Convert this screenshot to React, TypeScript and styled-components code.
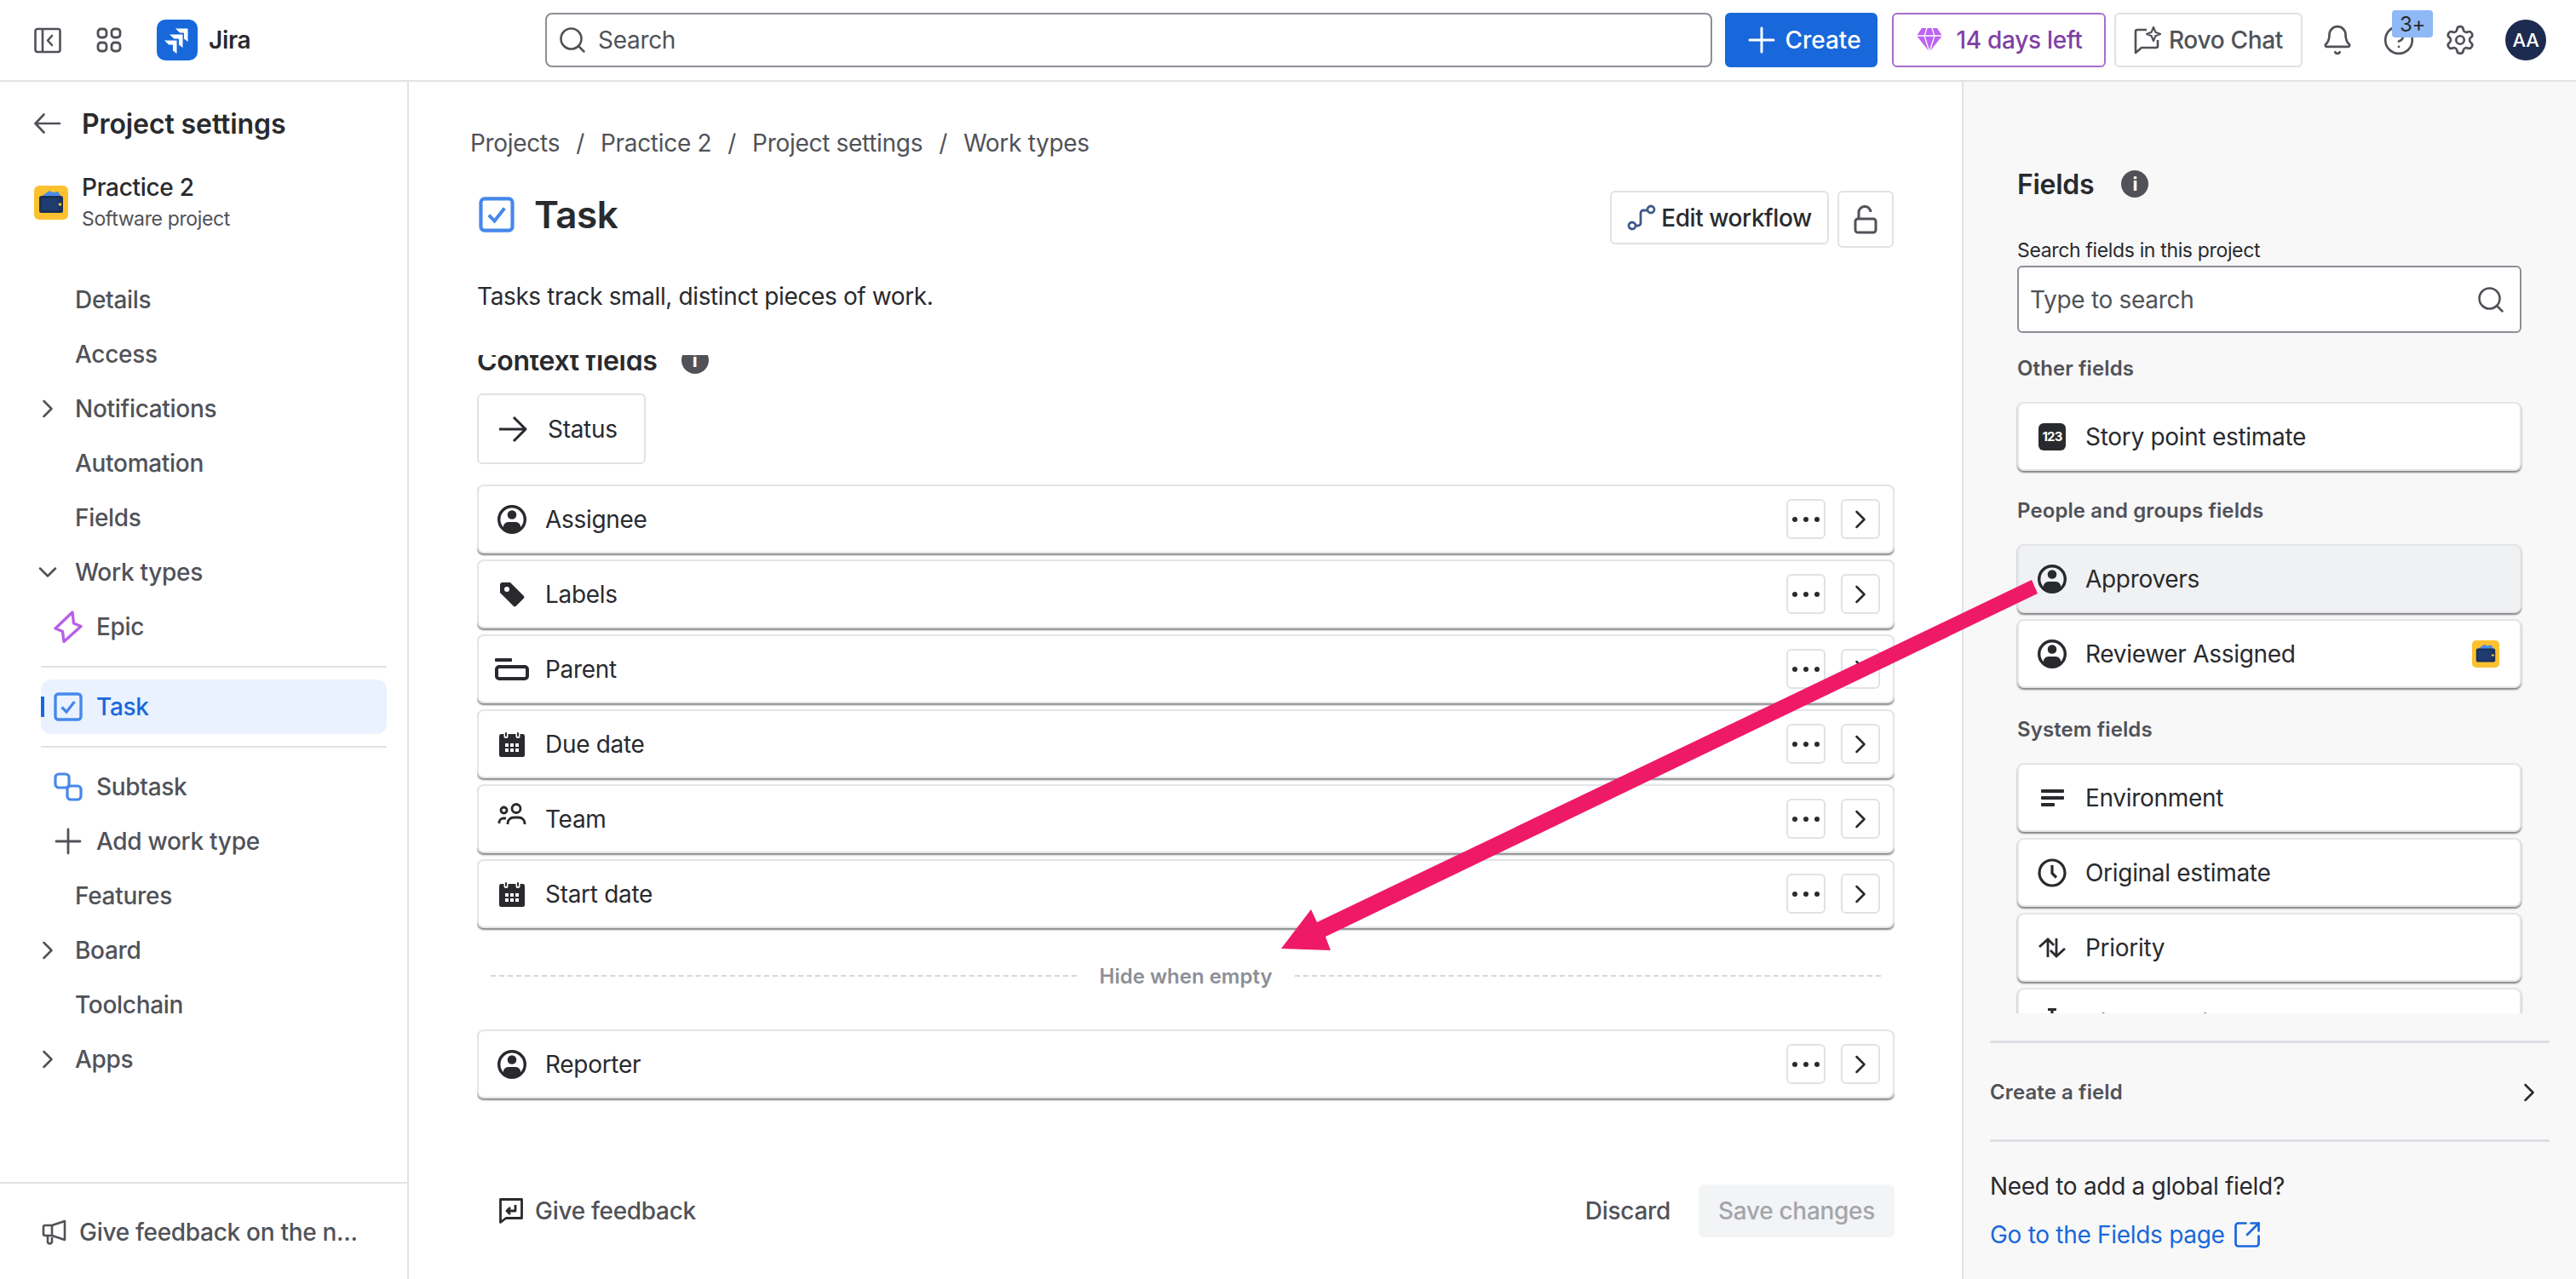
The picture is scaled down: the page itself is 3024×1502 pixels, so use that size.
import React from 'react';
import styled, { createGlobalStyle } from 'styled-components';
import { Bell, ChevronDown, ChevronRight, CircleHelp, Plus, Search, Settings, SquareArrowOutUpRight } from 'lucide-react';

const GlobalStyle = createGlobalStyle`
  html, body {
    margin: 0;
    padding: 0;
    background: #fff;
    overflow: hidden;
  }
  * {
    box-sizing: border-box;
  }
  svg {
    flex: none;
  }
`;

const Page = styled.div`
  position: relative;
  width: 3024px;
  height: 1502px;
  display: flex;
  flex-direction: column;
  overflow: hidden;
  font-family: Inter, 'Liberation Sans', sans-serif;
  font-size: 28px;
  letter-spacing: -0.3px;
  color: #292a2e;
`;

const TopBar = styled.header`
  height: 96px;
  flex: none;
  display: flex;
  align-items: center;
  border-bottom: 2px solid #e0e2e6;
`;

const Brand = styled.div`
  width: 640px;
  flex: none;
  display: flex;
  align-items: center;
  gap: 40px;
  padding-left: 40px;
`;

const IconSlot = styled.span<{ $ml?: number }>`
  width: 32px;
  height: 32px;
  flex: none;
  display: inline-flex;
  align-items: center;
  justify-content: center;
  position: relative;
  margin-left: ${({ $ml }) => $ml ?? 0}px;
  color: #505258;
`;

const LogoGroup = styled.div`
  display: flex;
  align-items: center;
  gap: 13px;
`;

const LogoText = styled.span`
  font-size: 28px;
  font-weight: 600;
  color: #292a2e;
`;

const SearchBar = styled.div`
  width: 1370px;
  height: 64px;
  flex: none;
  display: flex;
  align-items: center;
  gap: 12px;
  padding-left: 12px;
  border: 2px solid #8c8f97;
  border-radius: 8px;
  color: #505258;
`;

const buttonGap = { primary: 3, trial: 16, plain: 9 };

const TopButton = styled.button<{ $width: number; $ml: number; $kind: 'primary' | 'trial' | 'plain' }>`
  width: ${({ $width }) => $width}px;
  height: 64px;
  flex: none;
  margin-left: ${({ $ml }) => $ml}px;
  display: flex;
  align-items: center;
  justify-content: center;
  gap: ${({ $kind }) => buttonGap[$kind]}px;
  padding: 0;
  border-radius: 6px;
  font: inherit;
  letter-spacing: ${({ $kind }) => ($kind === 'primary' ? '0' : 'inherit')};
  font-weight: 500;
  background: ${({ $kind }) => ($kind === 'primary' ? '#1868db' : '#fff')};
  color: ${({ $kind }) => ($kind === 'primary' ? '#fff' : $kind === 'trial' ? '#803fa5' : '#505258')};
  border: 2px solid
    ${({ $kind }) => ($kind === 'primary' ? '#1868db' : $kind === 'trial' ? '#a86cc9' : '#dfe1e5')};
`;

const Badge = styled.span`
  position: absolute;
  left: 8px;
  top: -19px;
  width: 48px;
  height: 32px;
  display: flex;
  align-items: center;
  justify-content: center;
  background: #8fb8f6;
  border-radius: 4px;
  font-size: 24px;
  color: #292a2e;
`;

const Avatar = styled.span`
  width: 48px;
  height: 48px;
  flex: none;
  margin-left: 37px;
  border-radius: 50%;
  background: #1c2b4f;
  color: #fff;
  font-size: 22px;
  font-weight: 500;
  display: flex;
  align-items: center;
  justify-content: center;
`;

const Body = styled.div`
  flex: 1;
  min-height: 0;
  display: flex;
`;

const Sidebar = styled.aside`
  width: 480px;
  flex: none;
  display: flex;
  flex-direction: column;
  border-right: 2px solid #e0e2e6;
`;

const BackRow = styled.div`
  height: 50px;
  margin-top: 24px;
  display: flex;
  align-items: center;
  gap: 24px;
  padding-left: 40px;
  font-size: 32px;
  font-weight: 600;
  letter-spacing: -0.1px;
`;

const ProjectRow = styled.div`
  margin-top: 32px;
  display: flex;
  align-items: center;
  gap: 16px;
  padding-left: 40px;
`;

const ProjectText = styled.div`
  display: flex;
  flex-direction: column;
  gap: 3px;
`;

const ProjectName = styled.span`
  line-height: 36px;
  font-weight: 500;
`;

const ProjectKind = styled.span`
  line-height: 32px;
  font-size: 23px;
  letter-spacing: -0.37px;
  color: #505258;
`;

const NavList = styled.nav`
  margin-top: 47px;
  display: flex;
  flex-direction: column;
`;

const NavRow = styled.div`
  height: 64px;
  display: flex;
  align-items: center;
  padding-left: 88px;
  font-weight: 500;
  color: #505258;
`;

const NavChevron = styled.span`
  width: 36px;
  height: 36px;
  margin-left: -50px;
  margin-right: 14px;
  display: flex;
  align-items: center;
  justify-content: center;
`;

const TypeRow = styled.div`
  height: 64px;
  display: flex;
  align-items: center;
  gap: 16px;
  padding-left: 63px;
  font-weight: 500;
  color: #505258;
`;

const TypeIcon = styled.span`
  width: 34px;
  height: 38px;
  flex: none;
  display: flex;
  align-items: center;
  justify-content: center;
`;

const NavSeparator = styled.div`
  height: 2px;
  margin: 14px 24px 14px 48px;
  background: #e0e2e6;
`;

const ActiveType = styled.div`
  position: relative;
  height: 64px;
  margin: 0 24px 0 48px;
  display: flex;
  align-items: center;
  gap: 16px;
  padding-left: 15px;
  background: #e9f2fe;
  border-radius: 12px;
  font-weight: 500;
  color: #1868db;

  &::before {
    content: '';
    position: absolute;
    left: 0;
    top: 20px;
    width: 4px;
    height: 24px;
    background: #1868db;
  }
`;

const SidebarFooter = styled.div`
  margin-top: auto;
  height: 114px;
  display: flex;
  align-items: center;
  gap: 13px;
  padding: 2px 0 0 48px;
  border-top: 2px solid #e0e2e6;
  font-weight: 500;
  color: #505258;
  white-space: nowrap;
`;

const Main = styled.main`
  flex: 1;
  min-width: 0;
  display: flex;
  flex-direction: column;
  padding: 0 79px 0 80px;
`;

const Breadcrumb = styled.div`
  margin: 52px 0 0 -8px;
  height: 40px;
  display: flex;
  align-items: center;
  gap: 19px;
  color: #505258;
`;

const TitleRow = styled.div`
  margin-top: 36px;
  height: 67px;
  display: flex;
  justify-content: space-between;
  align-items: flex-start;
  padding-right: 1px;
`;

const TitleGroup = styled.div`
  height: 56px;
  display: flex;
  align-items: center;
  gap: 23px;
  padding-left: 2px;
`;

const PageTitle = styled.h1`
  margin: 0;
  font-size: 44px;
  font-weight: 600;
  letter-spacing: -0.5px;
`;

const TitleActions = styled.div`
  display: flex;
  gap: 10px;
  align-items: flex-start;
`;

const OutlineButton = styled.button<{ $width: number; $height: number }>`
  width: ${({ $width }) => $width}px;
  height: ${({ $height }) => $height}px;
  display: flex;
  align-items: center;
  justify-content: center;
  gap: 6px;
  padding: 0;
  background: #fff;
  border: 2px solid #e0e2e6;
  border-radius: 6px;
  font: inherit;
  letter-spacing: -0.45px;
  font-weight: 500;
  color: #292a2e;
`;

const Description = styled.p`
  margin: 37px 0 0;
  line-height: 40px;
  letter-spacing: -0.38px;
`;

const ScrollArea = styled.div`
  margin-top: 49px;
  flex: 1;
  min-height: 0;
  overflow: hidden;
`;

const SectionHeading = styled.div`
  margin-top: -14px;
  height: 40px;
  display: flex;
  align-items: center;
  gap: 28px;
  font-size: 32px;
  font-weight: 600;
`;

const InfoDot = styled.span`
  width: 32px;
  height: 32px;
  flex: none;
  display: flex;
  align-items: center;
  justify-content: center;
  border-radius: 50%;
  background: #505258;
  color: #fff;
  font-size: 22px;
  font-weight: 700;
`;

const StatusBox = styled.div`
  margin-top: 19px;
  width: 198px;
  height: 83px;
  display: flex;
  align-items: center;
  gap: 24px;
  padding-left: 23px;
  border: 2px solid #e0e2e6;
  border-radius: 6px;
`;

const FieldStack = styled.div`
  margin-top: 24px;
  display: flex;
  flex-direction: column;
  gap: 7px;
`;

const FieldCard = styled.div<{ $active?: boolean }>`
  height: 81px;
  flex: none;
  display: flex;
  align-items: center;
  background: ${({ $active }) => ($active ? '#f0f1f2' : '#fff')};
  border: 2px solid #e4e5e8;
  border-radius: 8px;
  box-shadow: 0 2px 2px rgba(30, 31, 33, 0.55);
`;

const FieldIcon = styled.span<{ $width: number }>`
  width: ${({ $width }) => $width}px;
  flex: none;
  display: flex;
  align-items: center;
  justify-content: center;
`;

const FieldName = styled.span`
  flex: 1;
  min-width: 0;
`;

const SmallButton = styled.span`
  width: 46px;
  height: 47px;
  flex: none;
  margin-right: 18px;
  display: flex;
  align-items: center;
  justify-content: center;
  border: 2px solid #e0e2e6;
  border-radius: 6px;
  background: #fff;

  &:last-child {
    margin-right: 15px;
  }
`;

const EmptyDivider = styled.div`
  margin-top: 36px;
  height: 40px;
  display: flex;
  align-items: center;
  gap: 26px;
  padding: 0 16px;
  font-size: 24px;
  font-weight: 600;
  letter-spacing: 0;
  color: #8c8f97;
`;

const DashedLine = styled.span`
  flex: 1;
  border-top: 2px dashed #d6d8dc;
`;

const ReporterWrap = styled.div`
  margin-top: 43px;
`;

const FormFooter = styled.div`
  margin-top: 101px;
  height: 62px;
  display: flex;
  align-items: center;
  justify-content: space-between;
  font-weight: 500;
`;

const FeedbackLink = styled.div`
  display: flex;
  align-items: center;
  gap: 14px;
  padding-left: 26px;
  color: #505258;
`;

const FormActions = styled.div`
  display: flex;
  align-items: center;
  gap: 33px;
`;

const DiscardText = styled.span`
  color: #505258;
`;

const SaveButton = styled.span`
  width: 230px;
  height: 62px;
  display: flex;
  align-items: center;
  justify-content: center;
  background: #f3f4f5;
  border-radius: 6px;
  color: #a3a5ab;
`;

const Panel = styled.aside`
  width: 721px;
  flex: none;
  display: flex;
  flex-direction: column;
  background: #f8f8f8;
  border-left: 2px solid #e0e2e6;
`;

const PanelScroll = styled.div`
  height: 1094px;
  flex: none;
  overflow: hidden;
  padding: 100px 64px 0 63px;
`;

const PanelHeading = styled.div`
  height: 40px;
  display: flex;
  align-items: center;
  gap: 32px;
  font-size: 32px;
  font-weight: 600;
`;

const SearchLabel = styled.div`
  margin-top: 42px;
  line-height: 32px;
  font-size: 23px;
  letter-spacing: -0.35px;
`;

const FieldSearch = styled.div`
  margin-top: 2px;
  height: 79px;
  display: flex;
  align-items: center;
  justify-content: space-between;
  padding: 0 16px 0 13px;
  background: #fff;
  border: 2px solid #8c8f97;
  border-radius: 6px;
  color: #505258;
`;

const GroupLabel = styled.div<{ $mt: number }>`
  margin-top: ${({ $mt }) => $mt}px;
  line-height: 32px;
  font-size: 24px;
  font-weight: 600;
  letter-spacing: 0.1px;
  color: #505258;
`;

const PanelStack = styled.div`
  margin-top: 23px;
  display: flex;
  flex-direction: column;
  gap: 7px;
`;

const ProjectMark = styled.span`
  margin-right: 24px;
  display: flex;
`;

const NumberIcon = styled.span`
  width: 32px;
  height: 32px;
  display: flex;
  align-items: center;
  justify-content: center;
  background: #292a2e;
  border-radius: 6px;
  color: #fff;
  font-size: 15px;
  font-weight: 700;
  letter-spacing: -0.8px;
`;

const PanelBottom = styled.div`
  margin: 32px 31px 0 31px;
`;

const CreateRow = styled.div`
  height: 119px;
  display: flex;
  align-items: center;
  justify-content: space-between;
  padding: 2px 6px 0 0;
  border-top: 3px solid #dcdfe4;
  border-bottom: 3px solid #dcdfe4;
  font-size: 24px;
  font-weight: 600;
  letter-spacing: 0.1px;
  color: #505258;
`;

const HelpLine = styled.div`
  margin-top: 32px;
  line-height: 40px;
`;

const FieldsLink = styled.div`
  margin-top: 17px;
  line-height: 40px;
  display: flex;
  align-items: center;
  gap: 8px;
  color: #1868db;
`;

const ArrowOverlay = styled.svg`
  position: absolute;
  left: 0;
  top: 0;
  pointer-events: none;
`;

const ink = '#292a2e';

const PanelToggleIcon = () => (
  <svg width="32" height="32" viewBox="0 0 32 32" fill="none" stroke="currentColor" strokeWidth="2.6">
    <rect x="1.5" y="3" width="29" height="27" rx="2.5" />
    <path d="M10 3v27" />
    <path d="M21 11l-5 5.5 5 5.5" strokeLinecap="round" strokeLinejoin="round" />
  </svg>
);

const AppsIcon = () => (
  <svg width="32" height="32" viewBox="0 0 32 32" fill="none" stroke="currentColor" strokeWidth="2.8">
    <rect x="3" y="3" width="10" height="10" rx="3.5" />
    <rect x="19" y="3" width="10" height="10" rx="3.5" />
    <rect x="3" y="19" width="10" height="10" rx="3.5" />
    <rect x="19" y="19" width="10" height="10" rx="3.5" />
  </svg>
);

const JiraLogo = () => (
  <svg width="48" height="48" viewBox="0 0 48 48">
    <rect width="48" height="48" rx="10" fill="#1868db" />
    <g fill="#fff" stroke="#1868db" strokeWidth="1">
      <path d="M21 10h16v17l-5.500-4.500V16h-4.500z" />
      <path d="M14 17h17v17l-5.500-4.500V23h-5z" />
      <path d="M8 24h16v17l-5.500-4.500V30h-4.500z" />
    </g>
  </svg>
);

const GemIcon = () => (
  <svg width="32" height="30" viewBox="0 0 32 30">
    <path d="M7 1h18l6 9-15 19L1 10z" fill="#bf63f3" />
    <path d="M1 10h30M10 10l6 19 6-19M10 10l3-9M22 10l-3-9" stroke="#fff" strokeWidth="1.3" fill="none" />
  </svg>
);

const RovoIcon = () => (
  <svg width="32" height="34" viewBox="0 0 32 34" fill="none" stroke="currentColor" strokeWidth="2.6" strokeLinejoin="round">
    <path d="M15 5H4a2 2 0 0 0-2 2v25l7-6h17a2 2 0 0 0 2-2v-7" />
    <path d="M23 2l2.300 5.700L31 10l-5.700 2.300L23 18l-2.300-5.700L15 10l5.700-2.300z" strokeWidth="2.2" />
  </svg>
);

const BackArrow = () => (
  <svg width="32" height="32" viewBox="0 0 32 32" fill="none" stroke="#505258" strokeWidth="2.6" strokeLinecap="round" strokeLinejoin="round">
    <path d="M1.500 16H30M11.500 5.500L1.500 16l10 10.500" />
  </svg>
);

const WalletMark = ({ size }: { size: number }) => (
  <svg width={size} height={size} viewBox="0 0 40 40">
    <rect width="40" height="40" rx="6" fill="#fcc12f" />
    <path d="M8 13l10-7 4 2 6-1 4 6z" fill="#4a8be8" />
    <rect x="6" y="12" width="28" height="20" rx="2.500" fill="#1b3158" />
    <rect x="9" y="15" width="20" height="14" rx="1" fill="#1f3c70" />
    <circle cx="30.500" cy="22" r="1.800" fill="#fcc12f" />
  </svg>
);

const EpicIcon = () => (
  <svg width="34" height="38" viewBox="0 0 34 38" fill="none" stroke="#b85fe8" strokeWidth="3.300" strokeLinejoin="round">
    <path d="M22 2l1.500 13 8.500 3.500L12 36.500l-1.500-12L2 21z" />
  </svg>
);

const TaskIcon = ({ size }: { size: number }) => (
  <svg width={size} height={size} viewBox="0 0 34 34" fill="none" stroke="#4688ec">
    <rect x="2" y="2" width="30" height="30" rx="3.500" strokeWidth="3.400" />
    <path d="M9.500 17.500l5.500 5.500 9.500-12" strokeWidth="3.200" />
  </svg>
);

const SubtaskIcon = () => (
  <svg width="34" height="34" viewBox="0 0 34 34" fill="none" stroke="#4688ec" strokeWidth="3.200">
    <rect x="2" y="2" width="16" height="16" rx="4" />
    <rect x="16" y="16" width="16" height="16" rx="4" />
  </svg>
);

const MegaphoneIcon = () => (
  <svg width="32" height="32" viewBox="0 0 32 32" fill="none" stroke="#505258" strokeWidth="2.600" strokeLinejoin="round">
    <path d="M28 3v22l-15-5H5a2 2 0 0 1-2-2v-8a2 2 0 0 1 2-2h8zM13 8v12" />
    <path d="M8 20v7a2.500 2.500 0 0 0 5 0v-5" />
  </svg>
);

const WorkflowIcon = () => (
  <svg width="34" height="32" viewBox="0 0 34 32" fill="none" stroke="#3f5a8a" strokeWidth="2.800">
    <circle cx="6" cy="25" r="4" />
    <circle cx="28" cy="6" r="4" />
    <path d="M10 25h3a3 3 0 0 0 3-3V10a3 3 0 0 1 3-3h5" />
  </svg>
);

const OpenLockIcon = () => (
  <svg width="32" height="34" viewBox="0 0 32 34" fill="none" stroke="#505258" strokeWidth="3">
    <rect x="4" y="16" width="24" height="16" rx="3" />
    <path d="M8 16V9a7 7 0 0 1 14-1" />
  </svg>
);

const StatusArrow = () => (
  <svg width="34" height="32" viewBox="0 0 34 32" fill="none" stroke={ink} strokeWidth="3" strokeLinejoin="round">
    <path d="M1 16h31M18 2l14 14-14 14" />
  </svg>
);

const PersonIcon = () => (
  <svg width="34" height="34" viewBox="0 0 34 34">
    <circle cx="17" cy="17" r="15.300" fill="none" stroke={ink} strokeWidth="3.400" />
    <circle cx="17" cy="11.500" r="5.300" fill={ink} />
    <path d="M6.500 27.500c0-4 2.500-7.500 6.500-7.500h8c4 0 6.500 3.500 6.500 7.500-2.500 3-6.500 4.500-10.500 4.500s-8-1.500-10.500-4.500z" fill={ink} />
  </svg>
);

const TagIcon = () => (
  <svg width="30" height="30" viewBox="0 0 30 30">
    <path d="M1 4a3 3 0 0 1 3-3h9l15.500 15.500a2.500 2.500 0 0 1 0 3.500l-8.500 8.500a2.500 2.500 0 0 1-3.500 0L1 13z" fill={ink} />
    <circle cx="9" cy="9" r="3" fill="#fff" />
  </svg>
);

const ParentIcon = () => (
  <svg width="40" height="26" viewBox="0 0 40 26">
    <rect x="0" y="0" width="20" height="4" rx="1" fill={ink} />
    <rect x="2" y="10" width="36" height="14" rx="3" fill="none" stroke={ink} strokeWidth="4" />
  </svg>
);

const CalendarIcon = () => (
  <svg width="30" height="30" viewBox="0 0 30 30">
    <rect x="0" y="3" width="30" height="27" rx="2.500" fill={ink} />
    <rect x="5.500" y="0" width="5" height="8" rx="2.500" fill="#fff" />
    <rect x="19.500" y="0" width="5" height="8" rx="2.500" fill="#fff" />
    <rect x="7" y="1" width="2" height="5" rx="1" fill={ink} />
    <rect x="21" y="1" width="2" height="5" rx="1" fill={ink} />
    {[7, 13, 19].map(x =>
      [14, 20].map(y => <rect key={`${x}-${y}`} x={x} y={y} width="4" height="4" fill="#fff" />),
    )}
  </svg>
);

const TeamIcon = () => (
  <svg width="34" height="38" viewBox="0 0 34 38" fill="none" stroke={ink} strokeWidth="2.800">
    <circle cx="22" cy="6.500" r="5" />
    <circle cx="7.500" cy="8.500" r="3.500" />
    <path d="M12 25v-1a7 7 0 0 1 7-7h6a7 7 0 0 1 7 7v1" />
    <path d="M2 24v-1a5 5 0 0 1 5-5h3" />
  </svg>
);

const LinesIcon = () => (
  <svg width="30" height="24" viewBox="0 0 30 24" fill={ink}>
    <rect x="2" y="2" width="27" height="4" rx="1" />
    <rect x="2" y="10" width="27" height="4" rx="1" />
    <rect x="2" y="18" width="16" height="4" rx="1" />
  </svg>
);

const ClockIcon = () => (
  <svg width="34" height="34" viewBox="0 0 34 34" fill="none" stroke={ink} strokeWidth="3.200">
    <circle cx="17" cy="17" r="15" />
    <path d="M17 8v9.500l5 5" />
  </svg>
);

const SwapIcon = () => (
  <svg width="34" height="26" viewBox="0 0 34 26" fill="none" stroke={ink} strokeWidth="2.800">
    <path d="M12 24V3M2 12l10-9 7 7" />
    <path d="M22 2v21M15 16l7 7 10-9" />
  </svg>
);

const StopwatchIcon = () => (
  <svg width="34" height="34" viewBox="0 0 34 34" fill="none" stroke={ink} strokeWidth="3.200">
    <path d="M17 0v8M12 1.500h10" />
    <circle cx="17" cy="20" r="12" />
  </svg>
);

const DotsIcon = () => (
  <svg width="32" height="8" viewBox="0 0 32 8" fill={ink}>
    <circle cx="3" cy="4" r="3" />
    <circle cx="16" cy="4" r="3" />
    <circle cx="29" cy="4" r="3" />
  </svg>
);

const FeedbackIcon = () => (
  <svg width="28" height="30" viewBox="0 0 28 30" fill="none" stroke={ink} strokeWidth="2.800" strokeLinejoin="round">
    <path d="M1.500 1.500h25v22H8l-6.500 5z" />
    <path d="M19 8v7H9M13 11l-4 4 4 4" />
  </svg>
);

const contextFields = [
  { name: 'Assignee', icon: <PersonIcon /> },
  { name: 'Labels', icon: <TagIcon /> },
  { name: 'Parent', icon: <ParentIcon /> },
  { name: 'Due date', icon: <CalendarIcon /> },
  { name: 'Team', icon: <TeamIcon /> },
  { name: 'Start date', icon: <CalendarIcon /> },
];

const systemFields = [
  { name: 'Environment', icon: <LinesIcon /> },
  { name: 'Original estimate', icon: <ClockIcon /> },
  { name: 'Priority', icon: <SwapIcon /> },
  { name: 'Time tracking', icon: <StopwatchIcon /> },
];

const ContextRow = ({ name, icon }: { name: string; icon: React.ReactNode }) => (
  <FieldCard>
    <FieldIcon $width={78}>{icon}</FieldIcon>
    <FieldName>{name}</FieldName>
    <SmallButton>
      <DotsIcon />
    </SmallButton>
    <SmallButton>
      <ChevronRight size={36} strokeWidth={1.700} color={ink} />
    </SmallButton>
  </FieldCard>
);

const PanelRow = ({ name, icon, active, mark }: { name: string; icon: React.ReactNode; active?: boolean; mark?: boolean }) => (
  <FieldCard $active={active}>
    <FieldIcon $width={78}>{icon}</FieldIcon>
    <FieldName>{name}</FieldName>
    {mark && (
      <ProjectMark>
        <WalletMark size={32} />
      </ProjectMark>
    )}
  </FieldCard>
);

const NavChev = ({ open }: { open?: boolean }) => (
  <NavChevron>
    {open ? <ChevronDown size={36} strokeWidth={1.700} /> : <ChevronRight size={36} strokeWidth={1.700} />}
  </NavChevron>
);

const App: React.FC = () => {
  return (
    <Page>
      <GlobalStyle />
      <TopBar>
        <Brand>
          <IconSlot>
            <PanelToggleIcon />
          </IconSlot>
          <IconSlot>
            <AppsIcon />
          </IconSlot>
          <LogoGroup>
            <JiraLogo />
            <LogoText>Jira</LogoText>
          </LogoGroup>
        </Brand>
        <SearchBar>
          <Search size={36} strokeWidth={1.700} />
          <span>Search</span>
        </SearchBar>
        <TopButton $kind="primary" $width={179} $ml={15}>
          <Plus size={48} strokeWidth={1.500} />
          Create
        </TopButton>
        <TopButton $kind="trial" $width={251} $ml={17}>
          <GemIcon />
          14 days left
        </TopButton>
        <TopButton $kind="plain" $width={221} $ml={10}>
          <RovoIcon />
          Rovo Chat
        </TopButton>
        <IconSlot $ml={25}>
          <Bell size={38} strokeWidth={1.700} />
        </IconSlot>
        <IconSlot $ml={40}>
          <CircleHelp size={38} strokeWidth={1.700} />
          <Badge>3+</Badge>
        </IconSlot>
        <IconSlot $ml={40}>
          <Settings size={38} strokeWidth={1.700} />
        </IconSlot>
        <Avatar>AA</Avatar>
      </TopBar>

      <Body>
        <Sidebar>
          <BackRow>
            <BackArrow />
            Project settings
          </BackRow>
          <ProjectRow>
            <WalletMark size={40} />
            <ProjectText>
              <ProjectName>Practice 2</ProjectName>
              <ProjectKind>Software project</ProjectKind>
            </ProjectText>
          </ProjectRow>
          <NavList>
            <NavRow>Details</NavRow>
            <NavRow>Access</NavRow>
            <NavRow>
              <NavChev />
              Notifications
            </NavRow>
            <NavRow>Automation</NavRow>
            <NavRow>Fields</NavRow>
            <NavRow>
              <NavChev open />
              Work types
            </NavRow>
            <TypeRow>
              <TypeIcon>
                <EpicIcon />
              </TypeIcon>
              Epic
            </TypeRow>
            <NavSeparator />
            <ActiveType>
              <TypeIcon>
                <TaskIcon size={34} />
              </TypeIcon>
              Task
            </ActiveType>
            <NavSeparator />
            <TypeRow>
              <TypeIcon>
                <SubtaskIcon />
              </TypeIcon>
              Subtask
            </TypeRow>
            <TypeRow>
              <TypeIcon>
                <Plus size={48} strokeWidth={1.400} />
              </TypeIcon>
              Add work type
            </TypeRow>
            <NavRow>Features</NavRow>
            <NavRow>
              <NavChev />
              Board
            </NavRow>
            <NavRow>Toolchain</NavRow>
            <NavRow>
              <NavChev />
              Apps
            </NavRow>
          </NavList>
          <SidebarFooter>
            <MegaphoneIcon />
            <span>Give feedback on the n...</span>
          </SidebarFooter>
        </Sidebar>

        <Main>
          <Breadcrumb>
            <span>Projects</span>
            <span>/</span>
            <span>Practice 2</span>
            <span>/</span>
            <span>Project settings</span>
            <span>/</span>
            <span>Work types</span>
          </Breadcrumb>
          <TitleRow>
            <TitleGroup>
              <TaskIcon size={42} />
              <PageTitle>Task</PageTitle>
            </TitleGroup>
            <TitleActions>
              <OutlineButton $width={257} $height={63}>
                <WorkflowIcon />
                Edit workflow
              </OutlineButton>
              <OutlineButton $width={66} $height={67}>
                <OpenLockIcon />
              </OutlineButton>
            </TitleActions>
          </TitleRow>
          <Description>Tasks track small, distinct pieces of work.</Description>
          <ScrollArea>
            <SectionHeading>
              Context fields
              <InfoDot>i</InfoDot>
            </SectionHeading>
            <StatusBox>
              <StatusArrow />
              Status
            </StatusBox>
            <FieldStack>
              {contextFields.map(field => (
                <ContextRow key={field.name} name={field.name} icon={field.icon} />
              ))}
            </FieldStack>
            <EmptyDivider>
              <DashedLine />
              Hide when empty
              <DashedLine />
            </EmptyDivider>
            <ReporterWrap>
              <ContextRow name="Reporter" icon={<PersonIcon />} />
            </ReporterWrap>
            <FormFooter>
              <FeedbackLink>
                <FeedbackIcon />
                Give feedback
              </FeedbackLink>
              <FormActions>
                <DiscardText>Discard</DiscardText>
                <SaveButton>Save changes</SaveButton>
              </FormActions>
            </FormFooter>
          </ScrollArea>
        </Main>

        <Panel>
          <PanelScroll>
            <PanelHeading>
              Fields
              <InfoDot>i</InfoDot>
            </PanelHeading>
            <SearchLabel>Search fields in this project</SearchLabel>
            <FieldSearch>
              Type to search
              <Search size={36} strokeWidth={1.700} />
            </FieldSearch>
            <GroupLabel $mt={26}>Other fields</GroupLabel>
            <PanelStack>
              <PanelRow name="Story point estimate" icon={<NumberIcon>123</NumberIcon>} />
            </PanelStack>
            <GroupLabel $mt={31}>People and groups fields</GroupLabel>
            <PanelStack>
              <PanelRow name="Approvers" icon={<PersonIcon />} active />
              <PanelRow name="Reviewer Assigned" icon={<PersonIcon />} mark />
            </PanelStack>
            <GroupLabel $mt={33}>System fields</GroupLabel>
            <PanelStack>
              {systemFields.map(field => (
                <PanelRow key={field.name} name={field.name} icon={field.icon} />
              ))}
            </PanelStack>
          </PanelScroll>
          <PanelBottom>
            <CreateRow>
              Create a field
              <ChevronRight size={36} strokeWidth={1.700} color={ink} />
            </CreateRow>
            <HelpLine>Need to add a global field?</HelpLine>
            <FieldsLink>
              Go to the Fields page
              <SquareArrowOutUpRight size={36} strokeWidth={1.800} />
            </FieldsLink>
          </PanelBottom>
        </Panel>
      </Body>

      <ArrowOverlay width="3024" height="1502" viewBox="0 0 3024 1502">
        <polygon
          points="1504,1114 1539,1068 1546,1083 2385,681 2392,697 1556,1100 1562,1116"
          fill="#ef1a67"
        />
      </ArrowOverlay>
    </Page>
  );
};

export default App;
